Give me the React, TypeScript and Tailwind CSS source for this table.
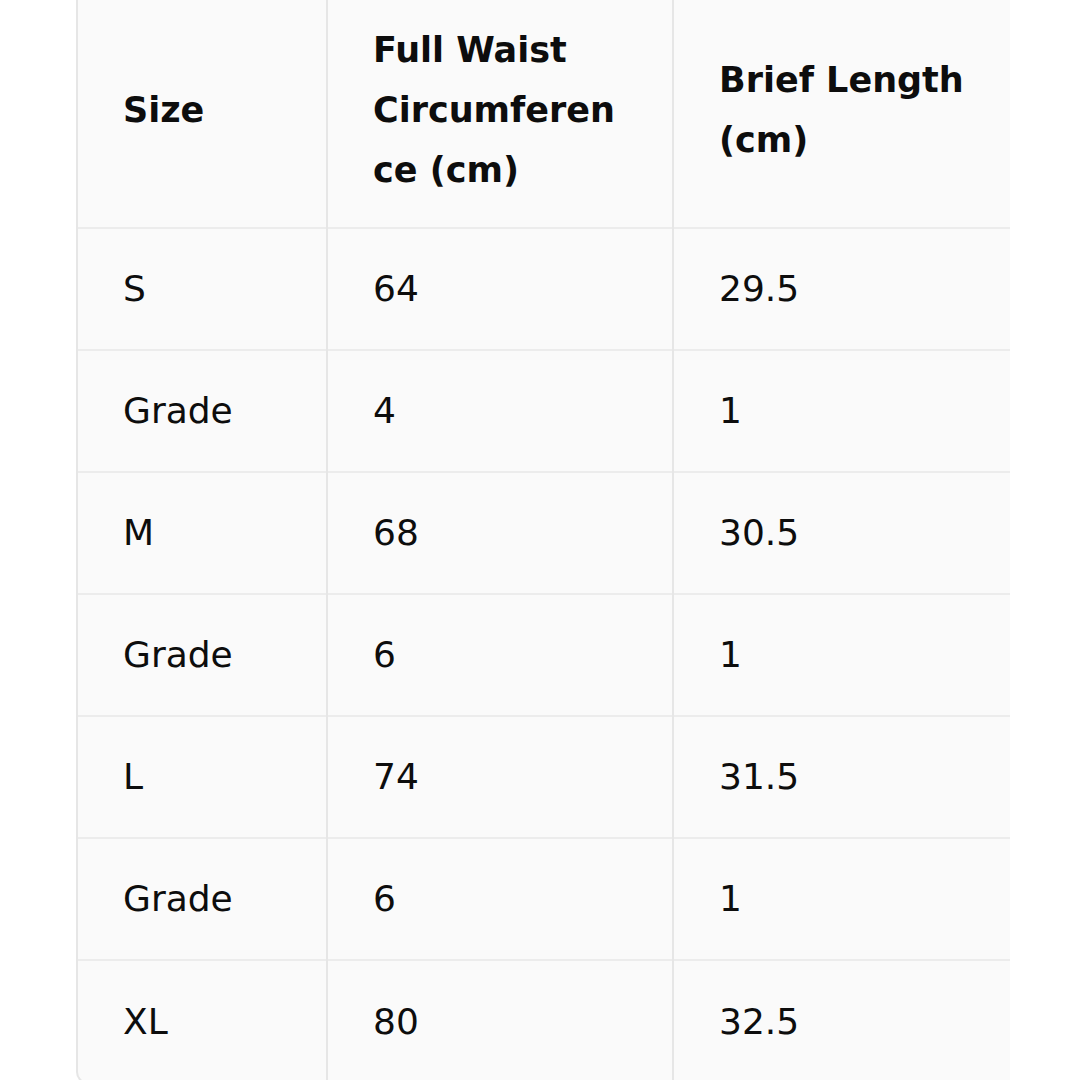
const rows: [string, string, string][] = [
  ["S", "64", "29.5"],
  ["Grade", "4", "1"],
  ["M", "68", "30.5"],
  ["Grade", "6", "1"],
  ["L", "74", "31.5"],
  ["Grade", "6", "1"],
  ["XL", "80", "32.5"],
];

export default function App() {
  return (
    <div className="w-[1080px] h-[1080px] bg-white overflow-hidden">
      <div
        className="ml-[76px] w-[934px] -mt-[8px] overflow-hidden rounded-bl-[12px] border-l-2 border-b-2 border-[#e6e6e6] bg-[#fafafa] text-[#0d0d0d]"
        style={{ fontFamily: '"DejaVu Sans", "Liberation Sans", sans-serif' }}
      >
        <table className="border-collapse w-[1100px] table-fixed text-[35px] leading-[60px]">
          <colgroup>
            <col className="w-[249px]" />
            <col className="w-[346px]" />
            <col />
          </colgroup>
          <thead>
            <tr className="h-[236px]">
              <th className="text-left align-middle font-bold px-[45px]">Size</th>
              <th className="text-left align-middle font-bold px-[45px] border-l-2 border-[#e6e6e6] break-words">
                Full Waist Circumference (cm)
              </th>
              <th className="text-left align-middle font-bold px-[45px] border-l-2 border-[#e6e6e6]">
                <div className="w-[270px]">Brief Length (cm)</div>
              </th>
            </tr>
          </thead>
          <tbody className="text-[36px]">
            {rows.map((r, i) => (
              <tr key={i} className="h-[122px] border-t-2 border-[#ececec]">
                <td className="px-[45px] align-middle">{r[0]}</td>
                <td className="px-[45px] align-middle border-l-2 border-[#e6e6e6]">{r[1]}</td>
                <td className="px-[45px] align-middle border-l-2 border-[#e6e6e6]">{r[2]}</td>
              </tr>
            ))}
          </tbody>
        </table>
      </div>
    </div>
  );
}
